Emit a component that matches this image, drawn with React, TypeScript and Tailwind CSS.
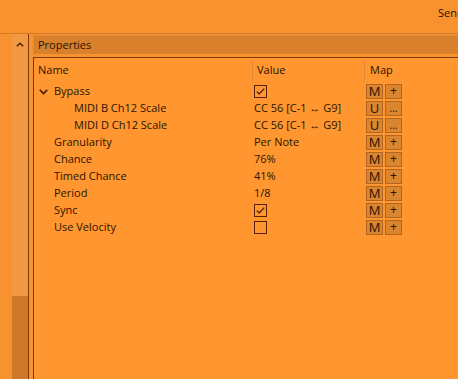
import React from "react";

const Chevron = () => (
  <svg width="9" height="6" viewBox="0 0 9 6" className="block">
    <path d="M0.8 0.8 L4.5 4.6 L8.2 0.8" fill="none" stroke="#4a2000" strokeWidth="1.7" />
  </svg>
);

const Check = ({ checked }: { checked: boolean }) => (
  <div className="w-[13px] h-[13px] border border-[#5a2200] flex items-center justify-center">
    {checked && (
      <svg width="11" height="11" viewBox="0 0 11 11">
        <path d="M1.8 5.6 L4.2 8 L9.3 2.6" fill="none" stroke="#3a1800" strokeWidth="1.2" />
      </svg>
    )}
  </div>
);

const Btn = ({ label }: { label: string }) => {
  const size = label === "..." ? "text-[10px] pb-[1px]" : label === "+" ? "text-[12px] pb-[1px]" : "text-[13px]";
  return (
    <div
      className={
        "w-[17px] h-[15px] border border-[#b2651f] bg-[#da852f] flex items-center justify-center leading-none text-[#2b1200] " +
        size
      }
    >
      {label}
    </div>
  );
};

type Row = {
  name: string;
  indent: number;
  chevron?: boolean;
  value?: string;
  check?: boolean;
  map: [string, string];
};

const rows: Row[] = [
  { name: "Bypass", indent: 0, chevron: true, check: true, map: ["M", "+"] },
  { name: "MIDI B Ch12 Scale", indent: 1, value: "CC 56 [C-1 \u2194 G9]", map: ["U", "..."] },
  { name: "MIDI D Ch12 Scale", indent: 1, value: "CC 56 [C-1 \u2194 G9]", map: ["U", "..."] },
  { name: "Granularity", indent: 0, value: "Per Note", map: ["M", "+"] },
  { name: "Chance", indent: 0, value: "76%", map: ["M", "+"] },
  { name: "Timed Chance", indent: 0, value: "41%", map: ["M", "+"] },
  { name: "Period", indent: 0, value: "1/8", map: ["M", "+"] },
  { name: "Sync", indent: 0, check: true, map: ["M", "+"] },
  { name: "Use Velocity", indent: 0, check: false, map: ["M", "+"] },
];

export default function App() {
  return (
    <div className="w-[458px] h-[379px] overflow-hidden bg-[#f8922f] flex flex-col font-['Open_Sans',sans-serif] text-[11px] text-[#2b1400]">
      {/* top bar */}
      <div className="h-[33px] flex items-start overflow-hidden pl-[438px]">
        <span className="mt-[5px] whitespace-nowrap">Send</span>
      </div>
      <div className="h-[1px] bg-[#d27b2b]" />
      <div className="flex-1 flex min-h-0">
        {/* left panel */}
        <div className="w-[12px]" />
        <div className="w-[16px] bg-[#f39843] flex flex-col">
          <div className="h-[17px] flex items-center justify-center pt-[4px]">
            <svg width="8" height="5" viewBox="0 0 8 5">
              <path d="M0.8 4.2 L4 1.2 L7.2 4.2" fill="none" stroke="#4a2200" strokeWidth="1.5" />
            </svg>
          </div>
          <div className="flex-1" />
          <div className="h-[83px] bg-[#cf7829]" />
        </div>
        <div className="w-[1px] bg-[#7a3a0a]" />
        <div className="w-[4px]" />
        {/* main */}
        <div className="flex-1 flex flex-col min-w-0">
          <div className="h-[1px]" />
          <div className="h-[19px] bg-[#d8802c] border-t border-l border-[#e1893a] border-b-[#eaa052] flex items-center pl-[4px]">
            Properties
          </div>
          <div className="h-[3px]" />
          <div className="flex-1 border-t border-l border-[#7a3a0a] bg-[#ff962f] flex flex-col">
            {/* header row */}
            <div className="h-[25px] flex items-center">
              <div className="w-[218px] pl-[4px]">Name</div>
              <div className="w-[1px] h-[21px] bg-[#e2873a]" />
              <div className="w-[111px] pl-[4px]">Value</div>
              <div className="w-[1px] h-[21px] bg-[#e2873a]" />
              <div className="pl-[5px]">Map</div>
            </div>
            {rows.map((r, i) => (
              <div key={i} className="h-[17px] flex items-center">
                <div className="w-[219px] flex items-center">
                  {r.indent === 0 ? (
                    <>
                      <div className="w-[20px] flex justify-end pr-[6px]">{r.chevron && <Chevron />}</div>
                      <span>{r.name}</span>
                    </>
                  ) : (
                    <span className="pl-[40px]">{r.name}</span>
                  )}
                </div>
                <div className="w-[113px] pl-[1px] flex items-center">
                  {r.check !== undefined ? <Check checked={r.check} /> : <span>{r.value}</span>}
                </div>
                <div className="flex gap-[2px]">
                  <Btn label={r.map[0]} />
                  <Btn label={r.map[1]} />
                </div>
              </div>
            ))}
          </div>
        </div>
      </div>
    </div>
  );
}
